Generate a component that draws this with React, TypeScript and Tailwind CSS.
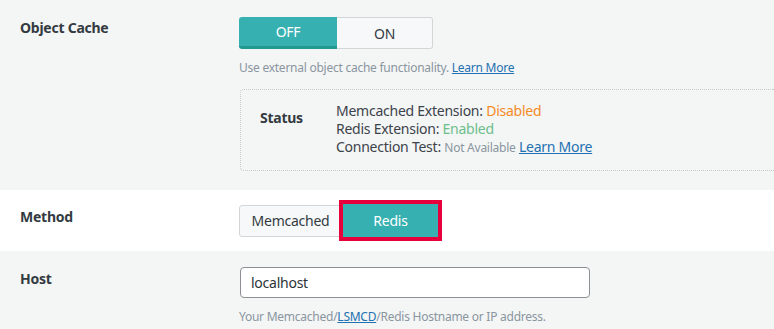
const font = { fontFamily: '"Noto Sans", "Open Sans", sans-serif' };

const Label = ({ children }: { children: React.ReactNode }) => (
  <div className="w-[239px] shrink-0 pl-5 text-[14px] font-bold text-[#333b41]">{children}</div>
);

export default function App() {
  return (
    <div className="w-[774px] h-[329px] overflow-hidden bg-[#f4f5f5] text-[#3c434a] tracking-[-0.25px]" style={font}>
      {/* object cache */}
      <div className="flex h-[190px] pt-[17px]">
        <Label>Object Cache</Label>
        <div className="flex-1">
          <div className="flex">
            <div className="w-[98px] h-[32px] flex items-center justify-center rounded-l-[3px] bg-[#36b0b0] border-b-[3px] border-[#21998f] text-white text-[14px]">
              OFF
            </div>
            <div className="w-[96px] h-[32px] flex items-center justify-center rounded-r-[3px] bg-[#f7f8f9] border border-l-0 border-[#d3d6d9] text-[14px] text-[#333b41]">
              ON
            </div>
          </div>
          <p className="mt-[10px] text-[12px] text-[#8a96a0]">
            Use external object cache functionality.{" "}
            <a className="text-[#2271b1] underline">Learn More</a>
          </p>
          <div className="mt-[12px] ml-[1px] h-[82px] flex items-start border border-dotted border-[#c6cacd] border-r-0 rounded-l-[4px] pt-[12px]">
            <div className="w-[95px] pl-[19px] pt-[5px] text-[14px] font-bold text-[#333b41]">Status</div>
            <div className="text-[14px] leading-[18px] text-[#3c434a]">
              <div>
                Memcached Extension: <span className="text-[#f58a1f]">Disabled</span>
              </div>
              <div>
                Redis Extension: <span className="text-[#6cbf8c]">Enabled</span>
              </div>
              <div>
                Connection Test: <span className="text-[12px] text-[#8a96a0]">Not Available</span>{" "}
                <a className="text-[#2271b1] underline">Learn More</a>
              </div>
            </div>
          </div>
        </div>
      </div>

      {/* method */}
      <div className="flex items-center h-[61px] bg-white">
        <Label>
          <span className="relative -top-[4px]">Method</span>
        </Label>
        <div className="flex items-center">
          <div className="w-[103px] h-[32px] flex items-center justify-center rounded-l-[3px] bg-[#f7f8f9] border border-[#d3d6d9] text-[14px] text-[#333b41]">
            Memcached
          </div>
          <div className="border-[4px] border-[#e8003d] -ml-[3px]">
            <div className="w-[95px] h-[33px] flex items-center justify-center bg-[#36b0b0] text-white text-[14px]">
              Redis
            </div>
          </div>
        </div>
      </div>

      {/* host */}
      <div className="flex pt-[16px]">
        <Label>
          <span className="relative top-[1px]">Host</span>
        </Label>
        <div className="flex-1">
          <div className="w-[350px] h-[31px] ml-[1px] flex items-center px-[10px] bg-white border border-[#8c8f94] rounded-[4px] text-[14px] text-[#2c3338]">
            localhost
          </div>
          <p className="mt-[10px] text-[12px] text-[#8a96a0]">
            Your Memcached/<a className="text-[#2271b1] underline">LSMCD</a>/Redis Hostname or IP address.
          </p>
        </div>
      </div>
    </div>
  );
}
